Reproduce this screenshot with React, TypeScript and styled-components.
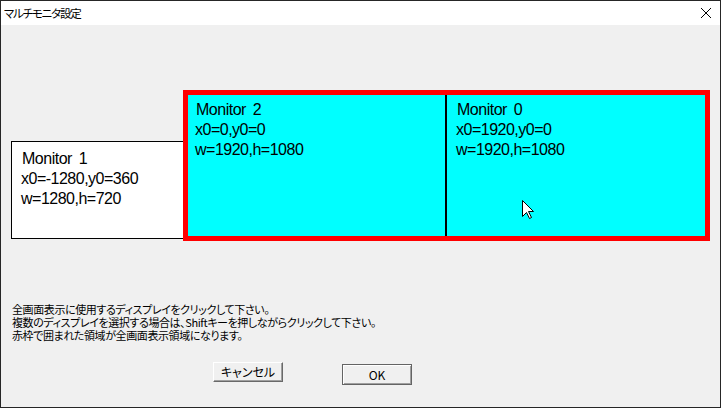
import styled, { createGlobalStyle } from "styled-components";

const GlobalStyle = createGlobalStyle`
  html, body {
    margin: 0;
    padding: 0;
    overflow: hidden;
    background: #f0f0f0;
  }
`;

const Window = styled.div`
  width: 721px;
  height: 408px;
  box-sizing: border-box;
  border: 1px solid #262626;
  display: flex;
  flex-direction: column;
  background: #f0f0f0;
  font-family: "Noto Sans CJK JP", sans-serif;
  font-feature-settings: "palt";
  color: #000;
`;

const TitleBar = styled.div`
  height: 24px;
  flex: none;
  background: #fff;
  display: flex;
  align-items: center;
  justify-content: space-between;
  padding: 0 9px 0 3px;
  font-size: 11.5px;
  letter-spacing: -1.2px;
`;

const Body = styled.div`
  flex: 1;
  display: flex;
  flex-direction: column;
`;

const Canvas = styled.div`
  position: relative;
  width: 697px;
  height: 147px;
  margin: 67px 0 0 10px;
`;

const MonitorBox = styled.div<{ $active: boolean }>`
  position: absolute;
  box-sizing: border-box;
  border: 1px solid #000;
  background: ${(p) => (p.$active ? "#00ffff" : "#ffffff")};
  padding: 7px 0 0 9px;
  font-family: "Liberation Sans", Arial, sans-serif;
  font-size: 16px;
  line-height: 20px;
  letter-spacing: -0.5px;
  white-space: pre;
`;

const MonitorName = styled.div`
  padding-left: 1px;
  word-spacing: 3px;
`;

const Selection = styled.div`
  position: absolute;
  box-sizing: border-box;
  border: 5px solid #ff0000;
  pointer-events: none;
`;

const Cursor = styled.svg`
  position: absolute;
  left: 511px;
  top: 108px;
`;

const Hint = styled.div`
  margin: 64px 0 0 11px;
  font-size: 11px;
  line-height: 13px;
  letter-spacing: -0.4px;
`;

const ButtonRow = styled.div`
  display: flex;
  align-items: flex-start;
  gap: 59px;
  margin: 20px 0 0 212px;
`;

const Button = styled.button<{ $default?: boolean }>`
  width: 70px;
  height: ${(p) => (p.$default ? "21px" : "20px")};
  margin-top: ${(p) => (p.$default ? "2px" : "0")};
  box-sizing: border-box;
  padding: 0;
  background: #f0f0f0;
  font-family: "Noto Sans CJK JP", sans-serif;
  font-feature-settings: "palt";
  font-size: 12px;
  line-height: 1;
  color: #000;
  border-style: solid;
  border-width: 1px;
  border-color: ${(p) =>
    p.$default ? "#646464" : "#ffffff #696969 #696969 #ffffff"};
  box-shadow: ${(p) =>
    p.$default
      ? "inset 1px 1px #ffffff, inset -1px -1px #a0a0a0"
      : "inset -1px -1px #a0a0a0"};
`;

interface Monitor {
  id: number;
  x: number;
  y: number;
  w: number;
  h: number;
  selected: boolean;
}

const monitors: Monitor[] = [
  { id: 1, x: -1280, y: 360, w: 1280, h: 720, selected: false },
  { id: 2, x: 0, y: 0, w: 1920, h: 1080, selected: true },
  { id: 0, x: 1920, y: 0, w: 1920, h: 1080, selected: true },
];

const SCALE = 0.136;
const minX = Math.min(...monitors.map((m) => m.x));
const minY = Math.min(...monitors.map((m) => m.y));

const place = (m: Monitor) => {
  const left = Math.round((m.x - minX) * SCALE);
  const top = Math.round((m.y - minY) * SCALE);
  const right = Math.round((m.x + m.w - minX) * SCALE);
  const bottom = Math.round((m.y + m.h - minY) * SCALE);
  return { left, top, right, bottom };
};

export default function App() {
  const boxes = monitors.map((m) => ({ m, r: place(m) }));
  const sel = boxes.filter((b) => b.m.selected).map((b) => b.r);
  const selLeft = Math.min(...sel.map((r) => r.left));
  const selTop = Math.min(...sel.map((r) => r.top));
  const selRight = Math.max(...sel.map((r) => r.right));
  const selBottom = Math.max(...sel.map((r) => r.bottom));

  return (
    <>
      <GlobalStyle />
      <Window>
        <TitleBar>
          <span>マルチモニタ設定</span>
          <svg width="10" height="10" viewBox="0 0 10 10">
            <path d="M0 0L10 10M10 0L0 10" stroke="#000" strokeWidth="1" />
          </svg>
        </TitleBar>
        <Body>
          <Canvas>
            {boxes.map(({ m, r }) => (
              <MonitorBox
                key={m.id}
                $active={m.selected}
                style={{
                  left: r.left,
                  top: r.top,
                  width: r.right - r.left,
                  height: r.bottom - r.top,
                }}
              >
                <MonitorName>Monitor {m.id}</MonitorName>
                <div>{`x0=${m.x},y0=${m.y}`}</div>
                <div>{`w=${m.w},h=${m.h}`}</div>
              </MonitorBox>
            ))}
            <Selection
              style={{
                left: selLeft - 2,
                top: selTop - 2,
                width: selRight - selLeft + 5,
                height: selBottom - selTop + 4,
              }}
            />
            <Cursor width="13" height="20" viewBox="0 0 13 20">
              <path
                d="M0.5 0.5L0.5 16.5L4.5 12.5L7.5 18.5L9.5 17.5L6.5 11.5L11.5 11.5Z"
                fill="#fff"
                stroke="#000"
                strokeWidth="1"
              />
            </Cursor>
          </Canvas>
          <Hint>
            全画面表示に使用するディスプレイをクリックして下さい。
            <br />
            複数のディスプレイを選択する場合は、Shiftキーを押しながらクリックして下さい。
            <br />
            赤枠で囲まれた領域が全画面表示領域になります。
          </Hint>
          <ButtonRow>
            <Button>キャンセル</Button>
            <Button $default>OK</Button>
          </ButtonRow>
        </Body>
      </Window>
    </>
  );
}
